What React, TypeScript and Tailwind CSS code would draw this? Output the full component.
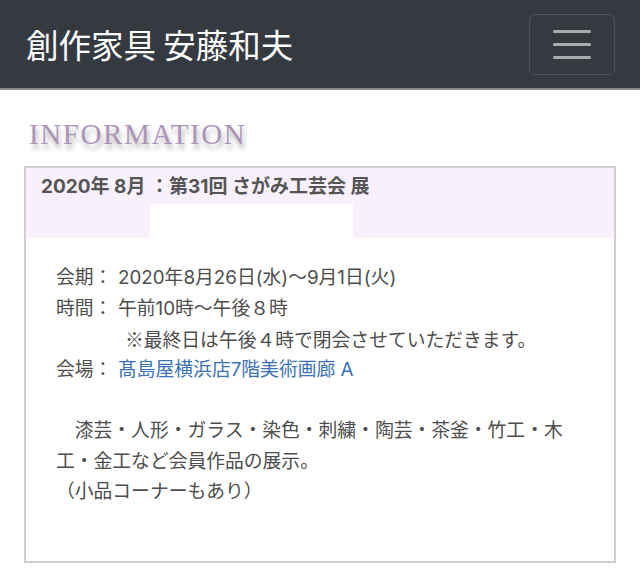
const font = '[font-family:"Inter","Noto_Sans_CJK_JP",sans-serif]';

export default function App() {
  return (
    <div className={`min-h-[587px] bg-white ${font}`}>
      <nav className="flex h-[90px] items-center justify-between border-b-2 border-[#8a8c8e] bg-[#343a40] pl-[26px] pr-[25px]">
        <span className="font-['Noto_Sans_CJK_JP',sans-serif] text-[32.5px] leading-none text-white">創作家具 安藤和夫</span>
        <button className="flex h-[61px] w-[86px] flex-col items-center justify-center gap-[10px] rounded-[6px] border border-[#4c5257]">
          <span className="block h-[3px] w-[38px] rounded bg-[#a9abad]" />
          <span className="block h-[3px] w-[38px] rounded bg-[#a9abad]" />
          <span className="block h-[3px] w-[38px] rounded bg-[#a9abad]" />
        </button>
      </nav>

      <div className="px-[24px] pt-[26px]">
        <h2 className="pl-[5px] font-['Liberation_Serif',serif] text-[29px] leading-[36px] tracking-[1.6px] text-[#ae94ba] [text-shadow:2px_5px_5px_rgba(0,0,0,0.3)]">
          INFORMATION
        </h2>

        <div className="mt-[14px] h-[397px] border-2 border-[#cfcfcf]">
          <div className="h-[70px] bg-[#f8f0fc] pl-[15px] pt-[6px]">
            <p className="text-[19px] font-bold leading-[26px] text-[#555]">2020年 8月 ：第31回 さがみ工芸会 展</p>
            <div className="ml-[109px] mt-[4px] h-[34px] w-[203px] bg-white" />
          </div>

          <div className="pl-[30px] pt-[25px] text-[18.8px] leading-[30.6px] text-[#4d4d4d]">
            <div className="flex">
              <span className="w-[62px]">会期：</span>
              <span>2020年8月26日(水)〜9月1日(火)</span>
            </div>
            <div className="flex">
              <span className="w-[62px]">時間：</span>
              <span>午前10時〜午後８時</span>
            </div>
            <div className="pl-[69px] font-['Noto_Sans_CJK_JP',sans-serif]">※最終日は午後４時で閉会させていただきます。</div>
            <div className="flex">
              <span className="w-[62px]">会場：</span>
              <span className="text-[#3b72b5]">髙島屋横浜店7階美術画廊 A</span>
            </div>
            <div className="h-[30.6px]" />
            <p className="w-[522px]">　漆芸・人形・ガラス・染色・刺繍・陶芸・茶釜・竹工・木工・金工など会員作品の展示。</p>
            <p>（小品コーナーもあり）</p>
          </div>
        </div>
      </div>
    </div>
  );
}
